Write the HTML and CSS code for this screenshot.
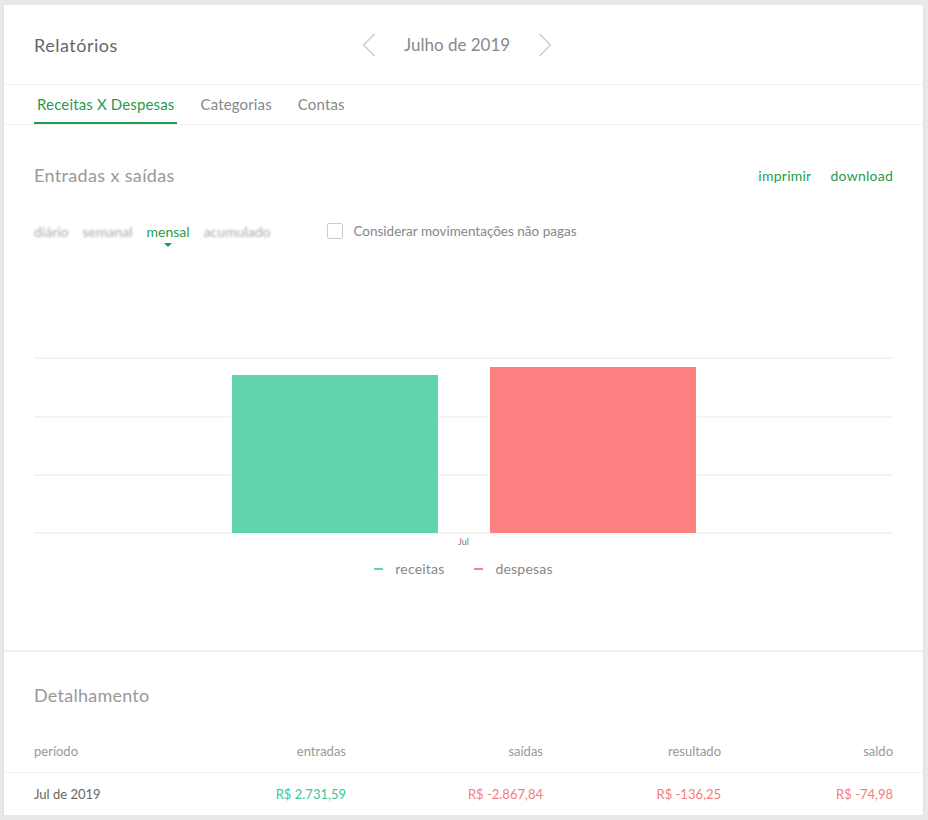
FILE: index.html
```html
<!DOCTYPE html>
<html lang="pt-BR">
<head>
<meta charset="utf-8">
<title>Relatórios</title>
<link rel="stylesheet" href="styles.css">
</head>
<body>
<div class="card">
  <header class="header">
    <h1 class="title">Relatórios</h1>
    <div class="month-nav">
      <button class="chev" aria-label="anterior">
        <svg width="14" height="24" viewBox="0 0 14 24"><path d="M12.5 1 L1.5 12 L12.5 23" fill="none" stroke="#c8c8c8" stroke-width="1.2"/></svg>
      </button>
      <span class="month">Julho de 2019</span>
      <button class="chev" aria-label="próximo">
        <svg width="14" height="24" viewBox="0 0 14 24"><path d="M1.5 1 L12.5 12 L1.5 23" fill="none" stroke="#c8c8c8" stroke-width="1.2"/></svg>
      </button>
    </div>
  </header>
  <nav class="tabs">
    <a class="tab active">Receitas X Despesas</a>
    <a class="tab">Categorias</a>
    <a class="tab">Contas</a>
  </nav>

  <section class="chart-section">
    <div class="section-head">
      <h2 class="section-title">Entradas x saídas</h2>
      <div class="actions">
        <a class="action">imprimir</a>
        <a class="action">download</a>
      </div>
    </div>
    <div class="filters">
      <div class="periods">
        <span class="period blur">diário</span>
        <span class="period blur">semanal</span>
        <span class="period active">mensal</span>
        <span class="period blur">acumulado</span>
      </div>
      <label class="check"><span class="box"></span>Considerar movimentações não pagas</label>
    </div>
    <svg class="chart" width="859" height="200" viewBox="0 0 859 200">
      <g stroke="#efefef" stroke-width="1.5">
        <line x1="0" y1="8" x2="859" y2="8"/>
        <line x1="0" y1="67" x2="859" y2="67"/>
        <line x1="0" y1="125" x2="859" y2="125"/>
        <line x1="0" y1="183" x2="859" y2="183"/>
      </g>
      <rect x="197" y="24" width="208" height="159" fill="#fff"/>
      <rect x="455" y="16" width="208" height="167" fill="#fff"/>
      <rect x="198" y="25" width="206" height="158" fill="#61d4ad"/>
      <rect x="456" y="17" width="206" height="166" fill="#fe8181"/>
      <text x="429.5" y="195" text-anchor="middle" class="axis-label">Jul</text>
    </svg>
    <div class="legend">
      <span class="legend-item"><i class="dash green"></i>receitas</span>
      <span class="legend-item"><i class="dash red"></i>despesas</span>
    </div>
  </section>

  <section class="detail-section">
    <h2 class="section-title detail-title">Detalhamento</h2>
    <div class="table">
      <div class="row head">
        <span>período</span>
        <span class="num">entradas</span>
        <span class="num">saídas</span>
        <span class="num">resultado</span>
        <span class="num">saldo</span>
      </div>
      <div class="row body">
        <span class="period-cell">Jul de 2019</span>
        <span class="num pos">R$ 2.731,59</span>
        <span class="num neg">R$ -2.867,84</span>
        <span class="num neg">R$ -136,25</span>
        <span class="num neg">R$ -74,98</span>
      </div>
    </div>
  </section>
</div>
</body>
</html>
```

FILE: styles.css
```css
* { box-sizing: border-box; }
html, body { margin: 0; padding: 0; }
body {
  background: #e9e9e9;
  font-family: Lato, "Open Sans", sans-serif;
  color: #888;
}
.card {
  background: #fff;
  width: 919px;
  height: 810px;
  margin: 5px 0 0 4px;
  box-shadow: 0 1px 3px rgba(0,0,0,0.08);
  overflow: hidden;
}
.header {
  height: 80px;
  display: flex;
  align-items: center;
  padding: 0 30px;
  border-bottom: 1px solid #f1f1f3;
}
.title {
  margin: 0;
  width: 328px;
  font-size: 18px;
  letter-spacing: 0.5px;
  font-weight: 400;
  color: #666;
}
.month-nav {
  display: flex;
  align-items: center;
  gap: 28px;
}
.chev {
  border: 0;
  background: none;
  padding: 0;
  width: 14px;
  height: 24px;
  display: block;
}
.month {
  font-size: 17px;
  color: #888;
}
.tabs {
  display: flex;
  gap: 20px;
  height: 40px;
  padding: 0 30px;
  border-bottom: 1px solid #f1f1f3;
}
.tab {
  display: flex;
  align-items: center;
  padding: 0 3px;
  font-size: 15px;
  letter-spacing: 0.15px;
  color: #888;
  border-bottom: 2px solid transparent;
}
.tab.active {
  color: #1f9c52;
  border-bottom-color: #1f9c52;
}
.chart-section {
  padding: 38px 30px 0;
  height: 527px;
  border-bottom: 2px solid #f1f1f3;
}
.section-head {
  display: flex;
  align-items: center;
  justify-content: space-between;
  height: 24px;
}
.section-title {
  margin: 0;
  font-size: 18px;
  letter-spacing: 0.35px;
  font-weight: 400;
  color: #999;
  line-height: 24px;
}
.detail-title {
  letter-spacing: 0.25px;
}
.actions {
  display: flex;
  gap: 19px;
}
.action {
  color: #1f9c52;
  font-size: 14px;
  letter-spacing: 0.25px;
}
.filters {
  margin-top: 34px;
  display: flex;
  align-items: center;
  height: 20px;
  gap: 57px;
}
.periods {
  display: flex;
  gap: 14px;
}
.period {
  font-size: 14px;
  color: #999;
  position: relative;
}
.period.blur {
  filter: blur(1.2px);
  color: #aaa;
}
.period.active {
  color: #1f9c52;
}
.period.active::after {
  content: "";
  position: absolute;
  left: 50%;
  top: 20px;
  margin-left: -4px;
  border-left: 4px solid transparent;
  border-right: 4px solid transparent;
  border-top: 4px solid #1f9c52;
}
.check {
  display: flex;
  align-items: center;
  gap: 10px;
  font-size: 13.5px;
  color: #888;
}
.box {
  width: 16px;
  height: 16px;
  border: 1px solid #ccc;
  border-radius: 2px;
}
.chart {
  display: block;
  margin-top: 109px;
}
.axis-label {
  font-family: Lato, sans-serif;
  font-size: 9px;
  fill: #777;
}
.legend {
  display: flex;
  justify-content: center;
  gap: 30px;
  margin-top: 9px;
  line-height: 20px;
  font-size: 14px;
  letter-spacing: 0.2px;
  color: #888;
}
.legend-item {
  display: flex;
  align-items: center;
  gap: 12px;
}
.dash {
  width: 9px;
  height: 2px;
  display: block;
}
.dash.green { background: #61d4ad; }
.dash.red { background: #fe8181; }
.detail-section {
  padding: 31px 30px 0;
}
.table {
  margin-top: 22px;
}
.row {
  display: grid;
  grid-template-columns: 150px 162px 197px 178px 172px;
  align-items: center;
  font-size: 13px;
  line-height: 20px;
}
.row.head {
  margin: 0 -30px;
  padding: 12px 30px 11px;
  border-bottom: 1px solid #f1f1f3;
  color: #999;
}
.row.body {
  padding: 11px 0;
}
.num { text-align: right; }
.period-cell { color: #666; }
.pos { color: #39c59c; }
.neg { color: #f57c7c; }
```
